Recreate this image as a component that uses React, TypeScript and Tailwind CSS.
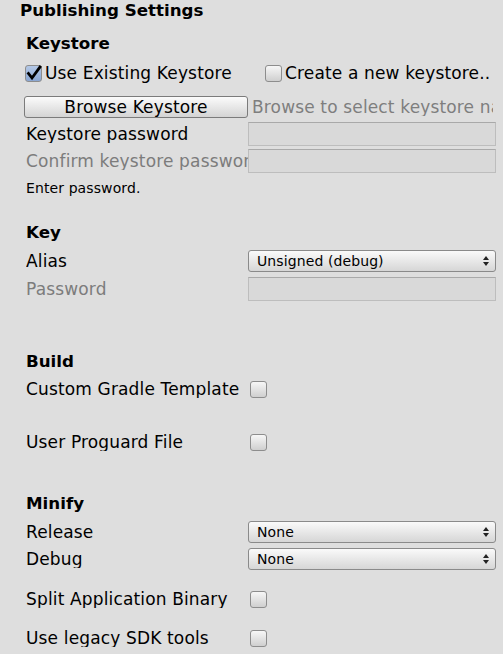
import React from "react";

const font = { fontFamily: '"DejaVu Sans", Verdana, sans-serif' };

function Checkbox({ checked = false }: { checked?: boolean }) {
  return (
    <div
      className={
        "relative w-[17px] h-[17px] rounded-[3px] border border-[#8d8d8d] shrink-0 " +
        (checked
          ? "bg-gradient-to-b from-[#b4c8e6] to-[#8aa6d2]"
          : "bg-gradient-to-b from-[#f7f7f7] to-[#cfcfcf]")
      }
    >
      {checked && (
        <svg viewBox="0 0 16 16" className="absolute left-[0px] top-[-1px] w-[16px] h-[16px]">
          <path d="M2.5 8.5 L6 13 L14 2" fill="none" stroke="#000" strokeWidth="2.8" strokeLinecap="square" />
        </svg>
      )}
    </div>
  );
}

function Field() {
  return <div className="w-[248px] h-[24px] bg-[#d9d9d9] border border-[#bdbdbd] border-t-[#a9a9a9]" />;
}

function Dropdown({ value }: { value: string }) {
  return (
    <div className="w-[248px] h-[22px] rounded-[3px] border border-[#8a8a8a] bg-gradient-to-b from-[#fafafa] to-[#d6d6d6] flex items-center pl-[8px] pr-[6px] text-[14px] tracking-[0.1px] text-black">
      <span className="flex-1">{value}</span>
      <svg width="6" height="10" viewBox="0 0 6 10">
        <path d="M3 0 L6 4 L0 4 Z" fill="#222" />
        <path d="M3 10 L6 6 L0 6 Z" fill="#222" />
      </svg>
    </div>
  );
}

function Row({ label, grey = false, children, h = 20, mt }: { label: string; grey?: boolean; children?: React.ReactNode; h?: number; mt: string }) {
  return (
    <div className={"flex items-center " + mt} style={{ height: h }}>
      <div className={"w-[222px] shrink-0 whitespace-nowrap overflow-hidden " + (grey ? "text-[#7c7c7c]" : "text-black")}>
        {label}
      </div>
      {children}
    </div>
  );
}

export default function App() {
  return (
    <div className="w-[503px] h-[654px] bg-[#dedede] overflow-hidden text-[17px] tracking-[0.15px] leading-none" style={font}>
      <div className="h-[20px] flex items-center pl-[20px] font-bold text-[16.7px] tracking-normal text-black">Publishing Settings</div>
      <div className="pl-[26px]">
        <div className="h-[20px] mt-[13px] flex items-center font-bold text-[16.7px] tracking-normal">Keystore</div>
        <div className="h-[20px] mt-[10px] flex items-center -ml-[1px]">
          <div className="flex items-center w-[240px]">
            <Checkbox checked />
            <span className="ml-[3px]">Use Existing Keystore</span>
          </div>
          <div className="flex items-center">
            <Checkbox />
            <span className="ml-[3px] whitespace-nowrap">Create a new keystore..</span>
          </div>
        </div>
        <div className="h-[22px] mt-[13px] flex items-center -ml-[2px]">
          <div className="w-[224px] h-[22px] rounded-[3px] border border-[#7b7b7b] bg-gradient-to-b from-[#fbfbfb] to-[#d4d4d4] flex items-center justify-center text-black shrink-0">
            Browse Keystore
          </div>
          <span className="ml-[4px] text-[#7e7e7e] whitespace-nowrap overflow-hidden w-[241px]">Browse to select keystore name</span>
        </div>
        <Row label="Keystore password" h={24} mt="mt-[4px]">
          <Field />
        </Row>
        <Row label="Confirm keystore password" grey h={24} mt="mt-[3px]">
          <Field />
        </Row>
        <div className="h-[16px] mt-[7px] flex items-center text-[14px] tracking-[0.1px]">Enter password.</div>
        <div className="h-[20px] mt-[26px] flex items-center font-bold text-[16.7px] tracking-normal">Key</div>
        <Row label="Alias" h={22} mt="mt-[8px]">
          <Dropdown value="Unsigned (debug)" />
        </Row>
        <Row label="Password" grey h={24} mt="mt-[5px]">
          <Field />
        </Row>
        <div className="h-[20px] mt-[50px] flex items-center font-bold text-[16.7px] tracking-normal">Build</div>
        <Row label="Custom Gradle Template" mt="mt-[8px]">
          <div className="ml-[2px]"><Checkbox /></div>
        </Row>
        <Row label="User Proguard File" mt="mt-[33px]">
          <div className="ml-[2px]"><Checkbox /></div>
        </Row>
        <div className="h-[20px] mt-[41px] flex items-center font-bold text-[16.7px] tracking-normal">Minify</div>
        <Row label="Release" h={22} mt="mt-[8px]">
          <Dropdown value="None" />
        </Row>
        <Row label="Debug" h={22} mt="mt-[5px]">
          <Dropdown value="None" />
        </Row>
        <Row label="Split Application Binary" mt="mt-[19px]">
          <div className="ml-[2px]"><Checkbox /></div>
        </Row>
        <Row label="Use legacy SDK tools" mt="mt-[19px]">
          <div className="ml-[2px]"><Checkbox /></div>
        </Row>
      </div>
    </div>
  );
}
